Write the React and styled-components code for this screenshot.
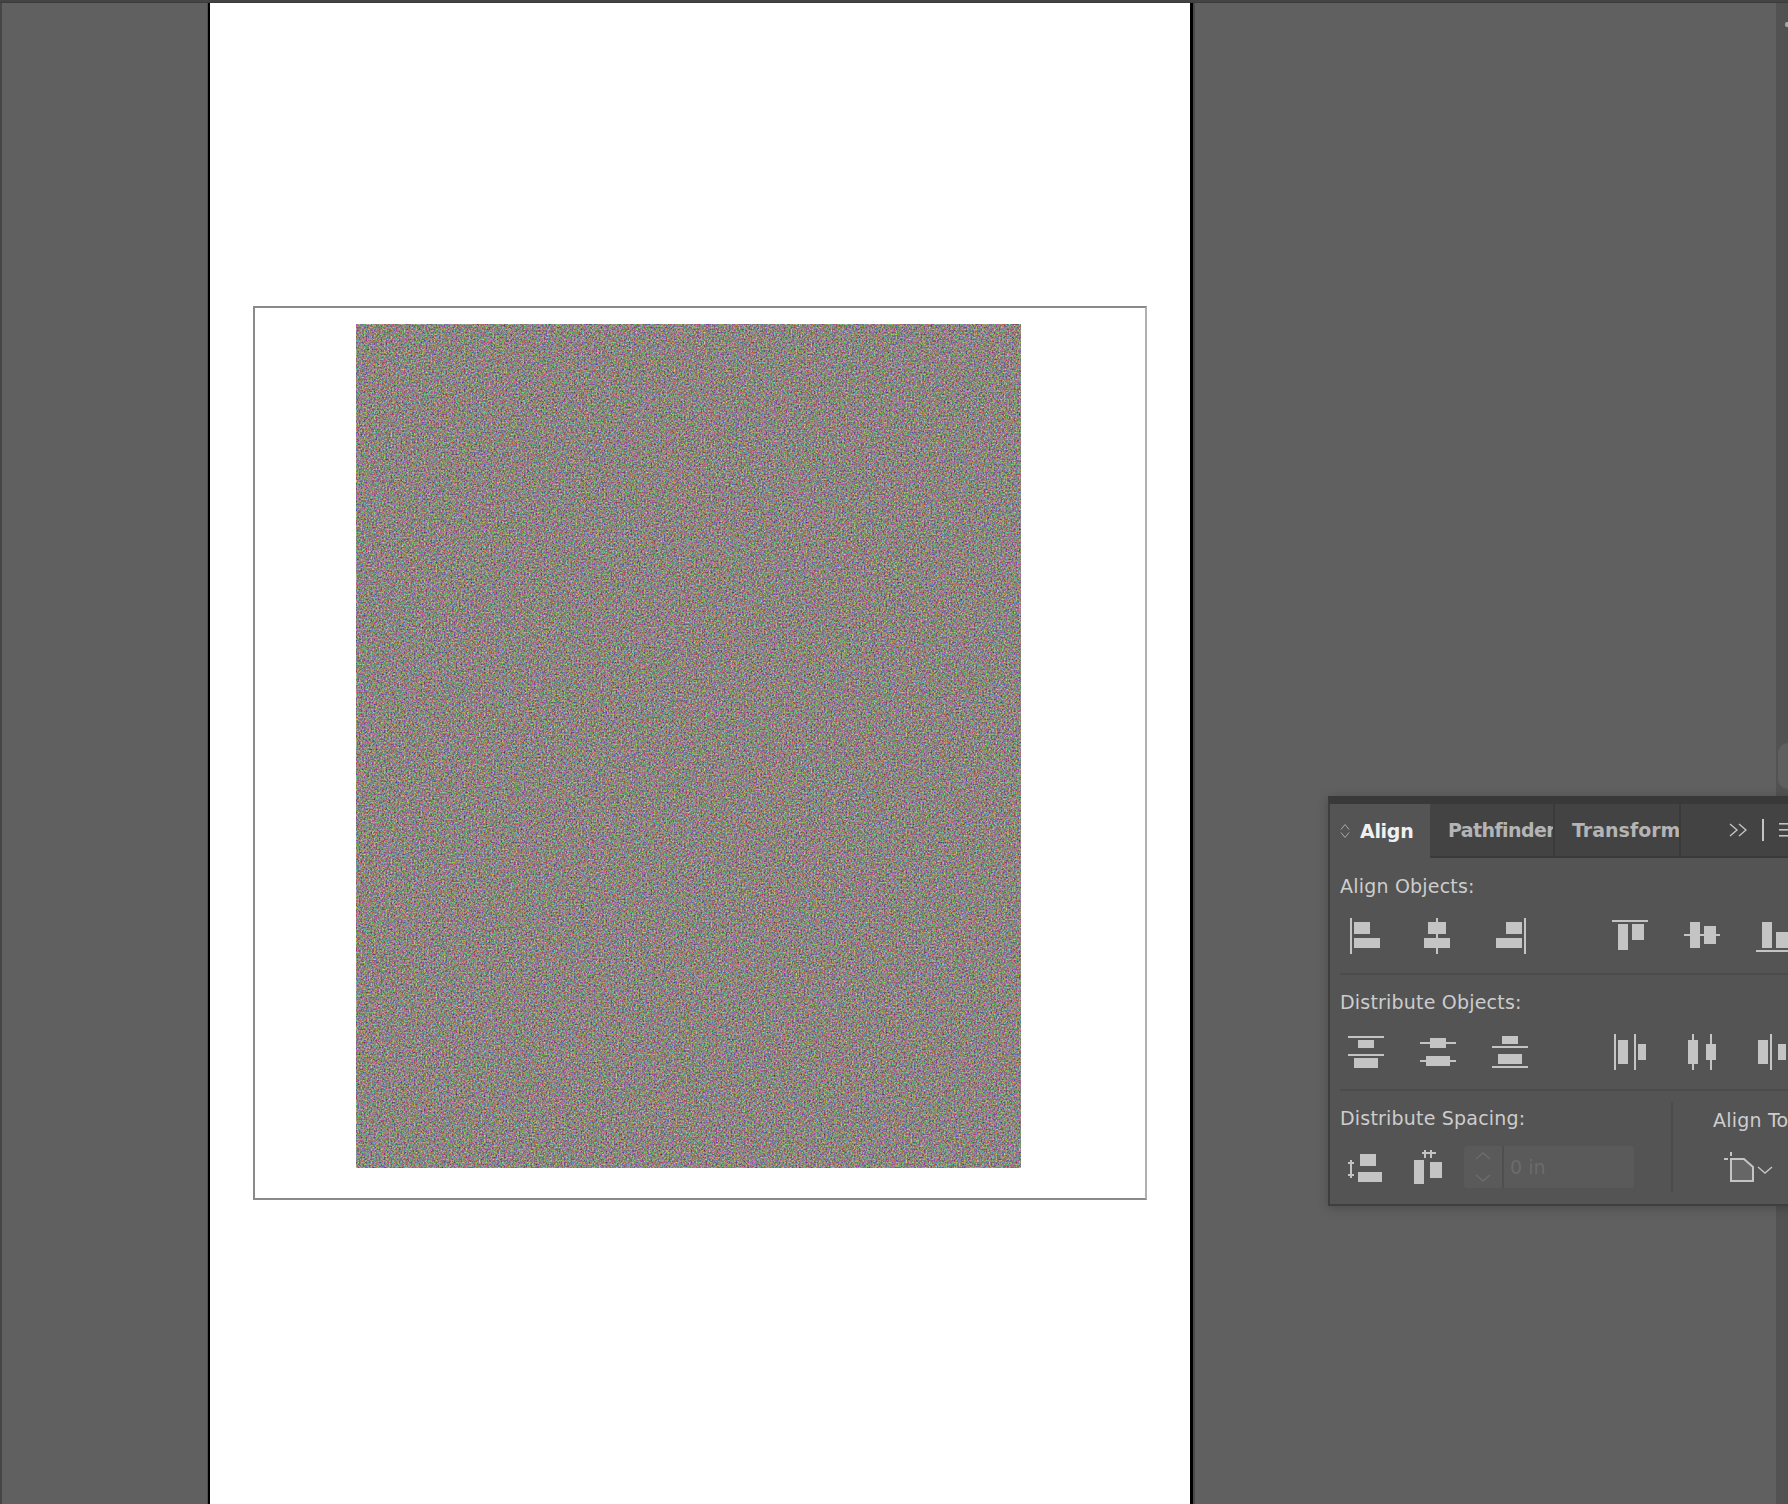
import React from 'react';
import styled, { createGlobalStyle } from 'styled-components';

const Global = createGlobalStyle`
    html, body {
        margin: 0;
        padding: 0;
        background: #606060;
    }
`

const Window = styled.div`
    position: relative;
    width: 1788px;
    height: 1504px;
    overflow: hidden;
    display: flex;
    flex-direction: column;
    background: #606060;
    font-family: "DejaVu Sans", sans-serif;
`

const TopEdge = styled.div`
    flex: none;
    height: 3px;
    background: #444;
    border-bottom: 1px solid #3b3b3b;
    box-sizing: border-box;
`

const Workspace = styled.div`
    flex: 1;
    display: flex;
    min-height: 0;
`

const Gutter = styled.div`
    flex: none;
    width: 208px;
    box-sizing: border-box;
    background: #606060;
    border-left: 2px solid #464646;
    border-right: 1px solid #4e4e4e;
`

const Page = styled.div`
    flex: none;
    width: 985px;
    box-sizing: border-box;
    padding: 303px 0 0 43px;
    background: #fff;
    border-left: 2px solid #000;
    border-right: 3px solid #000;
`

const ArtBox = styled.div`
    width: 894px;
    height: 894px;
    box-sizing: border-box;
    padding: 16px 0 0 101px;
    border: 2px solid #8a8a8a;
    border-right-color: #b0b0b0;
`

const Noise = styled.svg`
    display: block;
    width: 665px;
    height: 844px;
`

const Pasteboard = styled.div`
    flex: 1;
    min-width: 0;
    padding: 793px 0 0 133px;
    border-left: 2px solid #4a4a4a;
    box-sizing: border-box;
`

const ScrollStrip = styled.div`
    position: absolute;
    top: 3px;
    right: 0;
    bottom: 0;
    width: 12px;
    background: #525252;
`

const ScrollThumb = styled.div`
    position: absolute;
    top: 740px;
    right: 0;
    width: 10px;
    height: 46px;
    background: #5f5f5f;
    border-radius: 12px 0 0 12px;
`

const ScrollMark = styled.div`
    position: absolute;
    top: 19px;
    right: 0;
    width: 3px;
    height: 5px;
    background: #a6a6a6;
    border-radius: 2px 0 0 2px;
`

const Panel = styled.section`
    position: relative;
    width: 520px;
    height: 410px;
    box-sizing: border-box;
    background: #545454;
    border-left: 2px solid #3e3e3e;
    border-bottom: 2px solid #3e3e3e;
    border-top: 8px solid #393939;
    box-shadow: 0 2px 10px rgba(0, 0, 0, .22);
    color: #c9c9c9;
`

const Tabs = styled.div`
    display: flex;
    height: 54px;
    box-sizing: border-box;
    background: #434343;
`

const Tab = styled.div`
    flex: none;
    display: flex;
    align-items: center;
    box-sizing: border-box;
    width: ${p => p.$width}px;
    height: 54px;
    padding-left: ${p => p.$pad}px;
    font-size: 19px;
    font-weight: bold;
    letter-spacing: ${p => p.$tracking}px;
    color: ${p => p.$active ? '#f0f0f0' : '#b4b4b4'};
    background: ${p => p.$active ? '#545454' : '#434343'};
    border-bottom: ${p => p.$active ? 'none' : '2px solid #3a3a3a'};
    border-right: ${p => p.$active ? 'none' : '2px solid #3a3a3a'};
    white-space: nowrap;
    overflow: hidden;
`

const TabFill = styled.div`
    flex: 1;
    display: flex;
    align-items: center;
    padding-left: 48px;
    gap: 15px;
    border-bottom: 2px solid #3a3a3a;
`

const Grip = styled.svg`
    flex: none;
    margin-right: 10px;
`

const Section = styled.div`
    margin-left: 10px;
    padding: ${p => p.$top}px 0 19px;
    border-bottom: 2px solid #4c4c4c;
`

const Label = styled.div`
    height: 24px;
    line-height: 24px;
    font-size: 19px;
    letter-spacing: .2px;
    color: #cdcdcd;
    white-space: nowrap;
`

const IconRow = styled.div`
    display: flex;
    gap: 36px;
    margin: 20px 0 0 8px;
`

const IconGroup = styled.div`
    display: flex;
    gap: 36px;
    margin-left: 48px;
    &:first-child {
        margin-left: 0;
    }
`

const Glyph = styled.svg`
    flex: none;
    display: block;
    fill: #c4c4c4;
`

const Footer = styled.div`
    display: flex;
    margin-left: 10px;
`

const SpacingColumn = styled.div`
    flex: none;
    width: 331px;
    padding-top: 15px;
`

const SpacingControls = styled.div`
    display: flex;
    align-items: flex-start;
    margin: 16px 0 0 8px;
`

const SpacingIcon = styled.div`
    flex: none;
    margin: 4px ${p => p.$gap}px 0 0;
`

const SpacingField = styled.div`
    display: flex;
    width: 170px;
    height: 42px;
    background: #5a5a5a;
    border-radius: 3px;
    overflow: hidden;
`

const Spinner = styled.svg`
    flex: none;
    display: block;
    width: 38px;
    height: 42px;
    border-right: 2px solid #4f4f4f;
`

const FieldValue = styled.div`
    padding-left: 6px;
    line-height: 42px;
    font-size: 19px;
    color: #6b6b6b;
`

const VDivider = styled.div`
    flex: none;
    width: 2px;
    height: 91px;
    margin-top: 11px;
    background: #4c4c4c;
`

const AlignToColumn = styled.div`
    padding: 17px 0 0 40px;
`

const AlignToIcon = styled.svg`
    display: block;
    margin: 20px 0 0 11px;
`

const alignIcons = [
    [[[2, 0, 2, 36], [6, 4, 16, 12], [6, 20, 26, 10]],
     [[16, 0, 2, 36], [8, 4, 18, 12], [4, 20, 26, 10]],
     [[32, 0, 2, 36], [14, 4, 16, 12], [4, 20, 26, 10]]],
    [[[0, 2, 36, 2], [6, 6, 10, 26], [20, 6, 12, 16]],
     [[0, 16, 36, 2], [6, 4, 10, 26], [20, 8, 12, 18]],
     [[0, 32, 36, 2], [6, 4, 10, 26], [20, 14, 12, 16]]]
];

const distributeIcons = [
    [[[0, 2, 36, 2], [10, 6, 16, 8], [0, 20, 36, 2], [6, 24, 24, 10]],
     [[0, 8, 36, 2], [10, 4, 16, 10], [0, 26, 36, 2], [6, 22, 24, 10]],
     [[10, 2, 16, 8], [0, 12, 36, 2], [6, 20, 24, 10], [0, 32, 36, 2]]],
    [[[2, 0, 2, 36], [6, 6, 10, 24], [22, 0, 2, 36], [26, 10, 8, 16]],
     [[8, 0, 2, 36], [4, 6, 10, 24], [26, 0, 2, 36], [22, 10, 10, 16]],
     [[2, 6, 10, 24], [14, 0, 2, 36], [22, 10, 8, 16], [32, 0, 2, 36]]]
];

const spacingVertical = [[12, 4, 16, 12], [10, 22, 24, 10], [2, 10, 2, 18], [0, 12, 6, 2], [0, 24, 6, 2]];
const spacingHorizontal = [[0, 10, 10, 24], [16, 12, 12, 16], [8, 2, 14, 2], [10, 0, 2, 8], [16, 0, 2, 8]];

const Icon = ({ rects }) => (
    <Glyph width="36" height="36" viewBox="0 0 36 36">
        {rects.map((r, i) => <rect key={i} x={r[0]} y={r[1]} width={r[2]} height={r[3]} />)}
    </Glyph>
);

const IconSet = ({ groups }) => (
    <IconRow>
        {groups.map((group, g) => (
            <IconGroup key={g}>
                {group.map((rects, i) => <Icon key={i} rects={rects} />)}
            </IconGroup>
        ))}
    </IconRow>
);

const App = () => (
    <Window>
        <Global />
        <TopEdge />
        <ScrollStrip>
            <ScrollMark />
            <ScrollThumb />
        </ScrollStrip>
        <Workspace>
            <Gutter />
            <Page>
                <ArtBox>
                    <Noise viewBox="0 0 665 844">
                        <filter id="grain" x="0" y="0" width="100%" height="100%" colorInterpolationFilters="sRGB">
                            <feTurbulence type="fractalNoise" baseFrequency="0.6" numOctaves="2" seed="7" />
                            <feColorMatrix type="matrix" values="1.0 0 0 0 0.05  0 1.0 0 0 0.02  0 0 1.0 0 0.005  0 0 0 0 1" />
                            <feGaussianBlur stdDeviation="0.45" />
                        </filter>
                        <rect width="665" height="844" filter="url(#grain)" />
                    </Noise>
                </ArtBox>
            </Page>
            <Pasteboard>
                <Panel>
                    <Tabs>
                        <Tab $active $width={100} $pad={10} $tracking={-0.3}>
                            <Grip width="10" height="16" viewBox="0 0 10 16" fill="none" stroke="#a8a8a8" strokeWidth="1">
                                <path d="M1 6.5 5 1.5 9 6.5M1 9.5 5 14.5 9 9.5" />
                            </Grip>
                            Align
                        </Tab>
                        <Tab $width={125} $pad={18} $tracking={-0.6}>Pathfinder</Tab>
                        <Tab $width={126} $pad={17} $tracking={0}>Transform</Tab>
                        <TabFill>
                            <svg width="18" height="16" viewBox="0 0 18 16" fill="none" stroke="#c4c4c4" strokeWidth="1.4">
                                <path d="M1 2 8 8 1 14M10 2 17 8 10 14" />
                            </svg>
                            <svg width="2" height="22" viewBox="0 0 2 22"><rect width="2" height="22" fill="#c4c4c4" /></svg>
                            <svg width="14" height="14" viewBox="0 0 14 14" fill="#c4c4c4">
                                <rect y="0" width="14" height="1.6" />
                                <rect y="6" width="14" height="1.6" />
                                <rect y="12" width="14" height="1.6" />
                            </svg>
                        </TabFill>
                    </Tabs>
                    <Section $top={16}>
                        <Label>Align Objects:</Label>
                        <IconSet groups={alignIcons} />
                    </Section>
                    <Section $top={15}>
                        <Label>Distribute Objects:</Label>
                        <IconSet groups={distributeIcons} />
                    </Section>
                    <Footer>
                        <SpacingColumn>
                            <Label>Distribute Spacing:</Label>
                            <SpacingControls>
                                <SpacingIcon $gap={30}><Icon rects={spacingVertical} /></SpacingIcon>
                                <SpacingIcon $gap={14}><Icon rects={spacingHorizontal} /></SpacingIcon>
                                <SpacingField>
                                    <Spinner viewBox="0 0 36 42" fill="none" stroke="#6c6c6c" strokeWidth="1.5">
                                        <path d="M11 13 18 7 25 13M11 29 18 35 25 29" />
                                    </Spinner>
                                    <FieldValue>0 in</FieldValue>
                                </SpacingField>
                            </SpacingControls>
                        </SpacingColumn>
                        <VDivider />
                        <AlignToColumn>
                            <Label>Align To:</Label>
                            <AlignToIcon width="50" height="31" viewBox="0 0 50 31">
                                <path d="M7 7h13l9 8v14H7z" fill="#666" stroke="#c4c4c4" strokeWidth="2" />
                                <path d="M0 7h4M7 0v4" stroke="#c4c4c4" strokeWidth="2" />
                                <path d="M34 15l7 6 7-6" fill="none" stroke="#c4c4c4" strokeWidth="1.4" />
                            </AlignToIcon>
                        </AlignToColumn>
                    </Footer>
                </Panel>
            </Pasteboard>
        </Workspace>
    </Window>
);

export default App;
